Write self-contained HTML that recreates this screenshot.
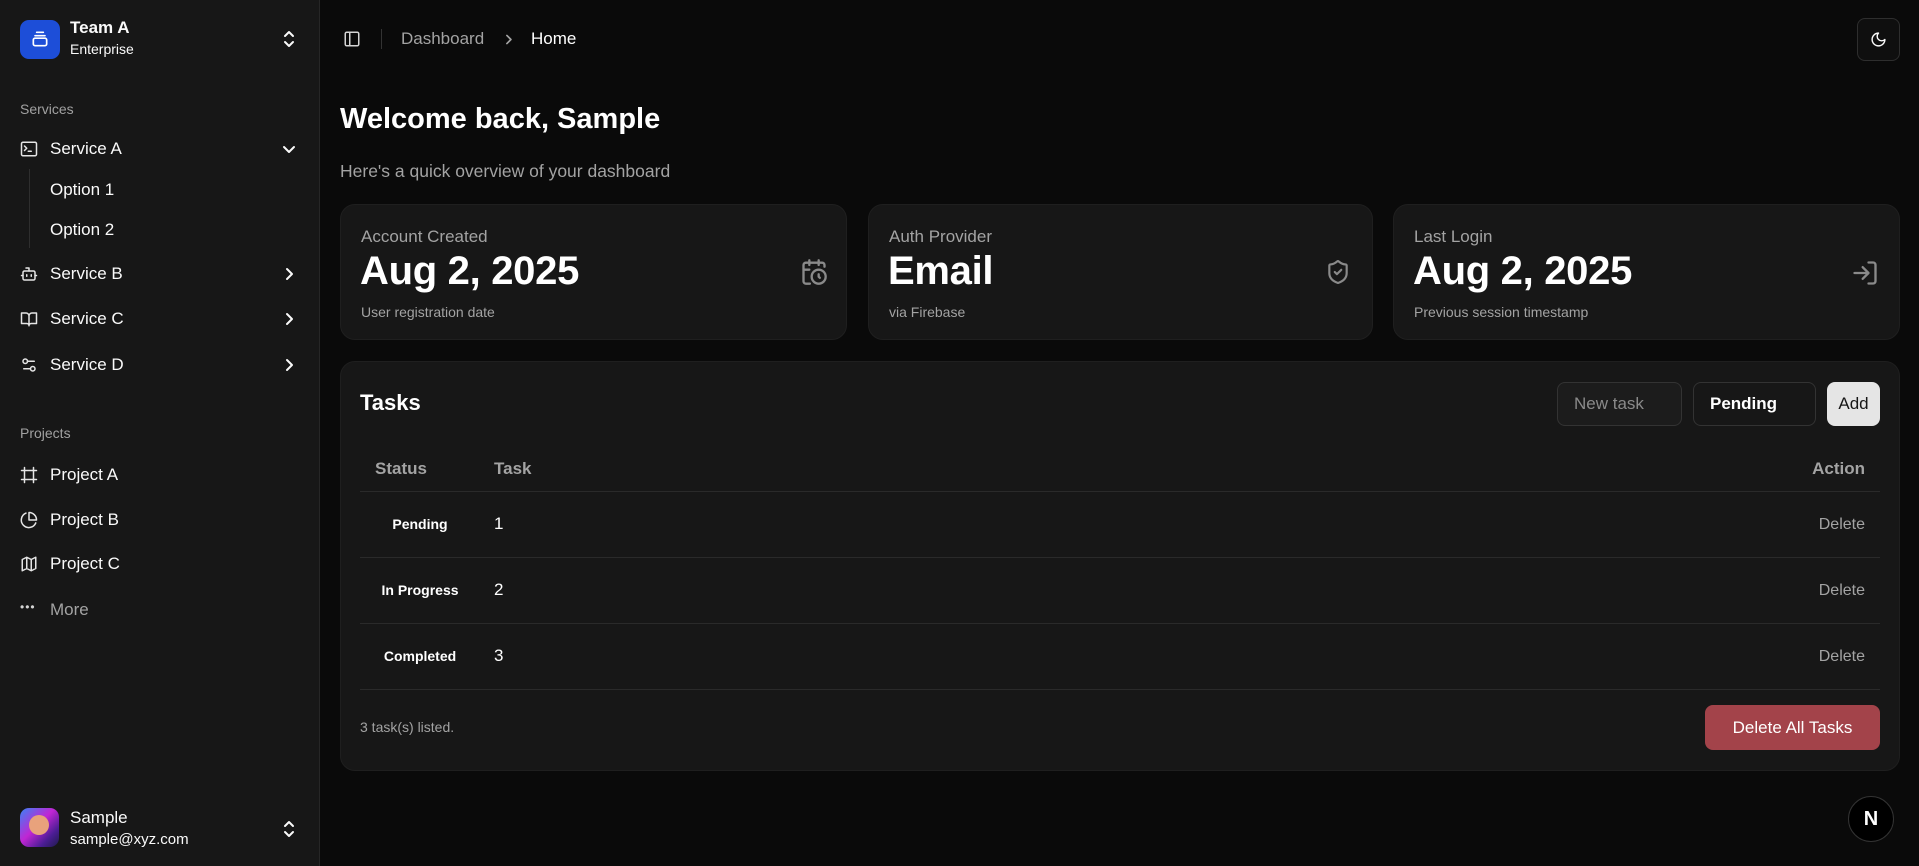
<!DOCTYPE html>
<html><head><meta charset="utf-8"><style>
*{box-sizing:border-box;margin:0;padding:0}
body{width:1919px;height:866px;background:#0a0a0a;font-family:"Liberation Sans",sans-serif;color:#fafafa;position:relative;overflow:hidden}
.abs{position:absolute}
.sb{position:absolute;left:0;top:0;width:320px;height:866px;background:#171717;border-right:1px solid #262626}
svg{position:absolute;fill:none;stroke:currentColor;stroke-width:2;stroke-linecap:round;stroke-linejoin:round}
.nav{position:absolute;left:50px;font-size:17px;color:#fafafa;transform:translateY(-50%)}
.ico{color:#e5e5e5}
.lbl{position:absolute;left:20px;font-size:14px;color:#a1a1a1;transform:translateY(-50%)}
.card{position:absolute;top:204px;height:136px;background:#171717;border-radius:15px;border:1px solid #1f1f1f}
.card .t{position:absolute;left:20px;top:22px;font-size:17px;color:#a3a3a3}
.card .v{position:absolute;left:19px;top:44px;font-size:40px;font-weight:bold;color:#fff;letter-spacing:-0.3px}
.card .s{position:absolute;left:20px;top:99px;font-size:14px;color:#a3a3a3}
.row{position:absolute;left:360px;width:1520px;height:1px;background:#2a2a2a}
.cell{position:absolute;transform:translateY(-50%)}
.st{font-size:14px;font-weight:bold;color:#fff;text-align:center;width:120px;left:360px}
.num{left:494px;font-size:17px;color:#fff}
.del{right:54px;font-size:16px;color:#a3a3a3}
</style></head><body>
<div class="sb">
  <div class="abs" style="left:20px;top:20px;width:40px;height:39px;background:#1d4ed8;border-radius:9px"></div>
  <svg style="left:30px;top:29px;color:#fff" width="20" height="20" viewBox="0 0 24 24"><path d="M8 4h8M6 8h12"/><rect x="4" y="11" width="16" height="9" rx="2"/></svg>
  <div class="abs" style="left:70px;top:18px;font-size:17px;font-weight:bold">Team A</div>
  <div class="abs" style="left:70px;top:41px;font-size:14px">Enterprise</div>
  <svg style="left:281px;top:30px" width="16" height="18" viewBox="0 0 16 18"><path d="M4 6l4-4 4 4M4 12l4 4 4-4"/></svg>

  <div class="lbl" style="top:109px">Services</div>
  <svg class="ico" style="left:20px;top:140px" width="18" height="18" viewBox="0 0 24 24"><rect x="2" y="3" width="20" height="18" rx="2"/><path d="M6 8l3 3-3 3M11 15h4"/></svg>
  <div class="nav" style="top:149px">Service A</div>
  <svg style="left:281px;top:141px" width="16" height="16" viewBox="0 0 16 16"><path d="M3 6l5 5 5-5"/></svg>
  <div class="abs" style="left:29px;top:169px;width:1px;height:79px;background:#2e2e2e"></div>
  <div class="nav" style="top:190px">Option 1</div>
  <div class="nav" style="top:230px">Option 2</div>
  <svg class="ico" style="left:20px;top:265px" width="18" height="18" viewBox="0 0 24 24"><path d="M12 8V4H8"/><rect x="4" y="8" width="16" height="12" rx="2"/><path d="M2 14h2M20 14h2M9 13v2M15 13v2"/></svg>
  <div class="nav" style="top:274px">Service B</div>
  <svg style="left:281px;top:266px" width="16" height="16" viewBox="0 0 16 16"><path d="M6 3l5 5-5 5"/></svg>
  <svg class="ico" style="left:20px;top:310px" width="18" height="18" viewBox="0 0 24 24"><path d="M2 4h6a4 4 0 0 1 4 4v13a3 3 0 0 0-3-3H2zM22 4h-6a4 4 0 0 0-4 4v13a3 3 0 0 1 3-3h7z"/></svg>
  <div class="nav" style="top:319px">Service C</div>
  <svg style="left:281px;top:311px" width="16" height="16" viewBox="0 0 16 16"><path d="M6 3l5 5-5 5"/></svg>
  <svg class="ico" style="left:20px;top:356px" width="18" height="18" viewBox="0 0 24 24"><path d="M14 17H5M19 7h-9"/><circle cx="17" cy="17" r="3"/><circle cx="7" cy="7" r="3"/></svg>
  <div class="nav" style="top:365px">Service D</div>
  <svg style="left:281px;top:357px" width="16" height="16" viewBox="0 0 16 16"><path d="M6 3l5 5-5 5"/></svg>

  <div class="lbl" style="top:433px">Projects</div>
  <svg class="ico" style="left:20px;top:466px" width="18" height="18" viewBox="0 0 24 24"><path d="M22 6H2M22 18H2M6 2v20M18 2v20"/></svg>
  <div class="nav" style="top:475px">Project A</div>
  <svg class="ico" style="left:20px;top:511px" width="18" height="18" viewBox="0 0 24 24"><path d="M21 15.9A10 10 0 1 1 8 2.8"/><path d="M22 12A10 10 0 0 0 12 2v10z"/></svg>
  <div class="nav" style="top:520px">Project B</div>
  <svg class="ico" style="left:20px;top:555px" width="18" height="18" viewBox="0 0 24 24"><path d="M3 6l6-3 6 3 6-3v15l-6 3-6-3-6 3zM9 3v15M15 6v15"/></svg>
  <div class="nav" style="top:564px">Project C</div>
  <div class="abs" style="left:20px;top:600px;font-size:12px;color:#d4d4d4;letter-spacing:1px">•••</div>
  <div class="nav" style="top:610px;color:#a3a3a3">More</div>

  <div class="abs" style="left:20px;top:808px;width:39px;height:39px;border-radius:9px;background:linear-gradient(135deg,#3b82f6,#c026d3 45%,#4c1d95 75%,#1e1b4b)"></div>
  <div class="abs" style="left:29px;top:815px;width:20px;height:20px;border-radius:50%;background:#e8a27c"></div>
  <div class="abs" style="left:70px;top:808px;font-size:17px">Sample</div>
  <div class="abs" style="left:70px;top:831px;font-size:15px">sample@xyz.com</div>
  <svg style="left:281px;top:820px" width="16" height="18" viewBox="0 0 16 18"><path d="M4 6l4-4 4 4M4 12l4 4 4-4"/></svg>
</div>

<svg style="left:343px;top:30px;color:#d4d4d4" width="18" height="18" viewBox="0 0 24 24"><rect x="3" y="3" width="18" height="18" rx="2"/><path d="M9 3v18"/></svg>
<div class="abs" style="left:381px;top:29px;width:1px;height:20px;background:#333"></div>
<div class="abs" style="left:401px;top:29px;font-size:17px;color:#a3a3a3">Dashboard</div>
<svg style="left:502px;top:33px;color:#a3a3a3" width="13" height="13" viewBox="0 0 16 16"><path d="M6 3l5 5-5 5"/></svg>
<div class="abs" style="left:531px;top:29px;font-size:17px;color:#fff">Home</div>
<div class="abs" style="left:1857px;top:18px;width:43px;height:43px;border:1px solid #2e2e2e;border-radius:8px;background:#0f0f0f"></div>
<svg style="left:1870px;top:31px" width="17" height="17" viewBox="0 0 24 24"><path d="M12 3a6 6 0 0 0 9 9 9 9 0 1 1-9-9z"/></svg>

<div class="abs" style="left:340px;top:103px;font-size:29px;font-weight:bold;color:#fff">Welcome back, Sample</div>
<div class="abs" style="left:340px;top:161px;font-size:17.5px;color:#a3a3a3">Here's a quick overview of your dashboard</div>

<div class="card" style="left:340px;width:507px"><div class="t">Account Created</div><div class="v">Aug 2, 2025</div><div class="s">User registration date</div>
<svg style="left:459px;top:53px;color:#8a8a8a" width="28" height="28" viewBox="0 0 24 24"><path d="M21 7.5V6a2 2 0 0 0-2-2H5a2 2 0 0 0-2 2v14a2 2 0 0 0 2 2h3.5M16 2v4M8 2v4M3 10h5"/><circle cx="16" cy="16" r="6"/><path d="M16 14v2l1 1"/></svg></div>
<div class="card" style="left:868px;width:505px"><div class="t">Auth Provider</div><div class="v">Email</div><div class="s">via Firebase</div>
<svg style="left:456px;top:54px;color:#8a8a8a" width="26" height="26" viewBox="0 0 24 24"><path d="M20 13c0 5-3.5 7.5-7.7 9a1 1 0 0 1-.6 0C7.5 20.5 4 18 4 13V6a1 1 0 0 1 1-1c2 0 4.5-1.2 6.2-2.7a1.2 1.2 0 0 1 1.5 0C14.5 3.8 17 5 19 5a1 1 0 0 1 1 1z"/><path d="M9 12l2 2 4-4"/></svg></div>
<div class="card" style="left:1393px;width:507px"><div class="t">Last Login</div><div class="v">Aug 2, 2025</div><div class="s">Previous session timestamp</div>
<svg style="left:457px;top:54px;color:#8a8a8a" width="28" height="28" viewBox="0 0 24 24"><path d="M15 3h4a2 2 0 0 1 2 2v14a2 2 0 0 1-2 2h-4M10 17l5-5-5-5M15 12H3"/></svg></div>

<div class="abs" style="left:340px;top:361px;width:1560px;height:410px;background:#171717;border-radius:15px;border:1px solid #1f1f1f"></div>
<div class="abs" style="left:360px;top:390px;font-size:22px;font-weight:bold;color:#fff">Tasks</div>
<div class="abs" style="left:1557px;top:382px;width:125px;height:44px;border:1px solid #333;border-radius:8px;background:#1c1c1c;font-size:17px;color:#8a8a8a;padding:11px 0 0 16px">New task</div>
<div class="abs" style="left:1693px;top:382px;width:123px;height:44px;border:1px solid #333;border-radius:8px;background:#171717;font-size:17px;font-weight:bold;color:#fff;padding:11px 0 0 16px">Pending</div>
<div class="abs" style="left:1827px;top:382px;width:53px;height:44px;border-radius:8px;background:#e5e5e5;font-size:17px;color:#171717;text-align:center;padding-top:12px">Add</div>

<div class="cell" style="left:375px;top:469px;font-size:17px;font-weight:bold;color:#a3a3a3">Status</div>
<div class="cell" style="left:494px;top:469px;font-size:17px;font-weight:bold;color:#a3a3a3">Task</div>
<div class="cell" style="right:54px;top:469px;font-size:17px;font-weight:bold;color:#a3a3a3">Action</div>
<div class="row" style="top:491px"></div>
<div class="cell st" style="top:524px">Pending</div><div class="cell num" style="top:524px">1</div><div class="cell del" style="top:525px">Delete</div>
<div class="row" style="top:557px"></div>
<div class="cell st" style="top:590px">In Progress</div><div class="cell num" style="top:590px">2</div><div class="cell del" style="top:591px">Delete</div>
<div class="row" style="top:623px"></div>
<div class="cell st" style="top:656px">Completed</div><div class="cell num" style="top:656px">3</div><div class="cell del" style="top:657px">Delete</div>
<div class="row" style="top:689px"></div>
<div class="cell" style="left:360px;top:727px;font-size:14px;color:#a3a3a3">3 task(s) listed.</div>
<div class="abs" style="left:1705px;top:705px;width:175px;height:45px;border-radius:8px;background:#a3434a;font-size:17px;color:#fff;text-align:center;padding-top:13px">Delete All Tasks</div>

<div class="abs" style="left:1848px;top:796px;width:46px;height:46px;border-radius:50%;background:#000;border:1px solid #333;color:#fff;font-size:20px;font-weight:bold;text-align:center;line-height:44px">N</div>
</body></html>
